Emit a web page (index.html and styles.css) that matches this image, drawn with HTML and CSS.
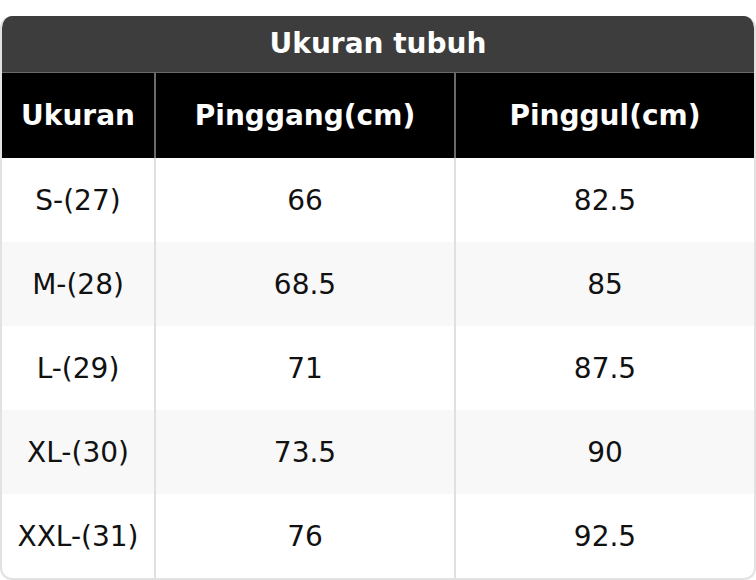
FILE: index.html
```html
<!DOCTYPE html>
<html>
<head>
<meta charset="utf-8">
<link rel="stylesheet" href="styles.css">
</head>
<body>
<div class="card">
  <div class="title">Ukuran tubuh</div>
  <table class="size-table">
    <colgroup>
      <col class="c1"><col class="c2"><col class="c3">
    </colgroup>
    <thead>
      <tr><th>Ukuran</th><th>Pinggang(cm)</th><th>Pinggul(cm)</th></tr>
    </thead>
    <tbody>
      <tr><td>S-(27)</td><td>66</td><td>82.5</td></tr>
      <tr><td>M-(28)</td><td>68.5</td><td>85</td></tr>
      <tr><td>L-(29)</td><td>71</td><td>87.5</td></tr>
      <tr><td>XL-(30)</td><td>73.5</td><td>90</td></tr>
      <tr><td>XXL-(31)</td><td>76</td><td>92.5</td></tr>
    </tbody>
  </table>
</div>
</body>
</html>
```
FILE: styles.css
```css
html, body {
  margin: 0;
  padding: 0;
  background: #ffffff;
}
body {
  padding-top: 16px;
  font-family: "DejaVu Sans", sans-serif;
}
.card {
  width: 756px;
  height: 564px;
  box-sizing: border-box;
  border-radius: 12px;
  overflow: hidden;
  border: 2px solid #e2e2e2;
  border-top: none;
}
.title {
  height: 55px;
  background: #3d3d3d;
  color: #ffffff;
  font-weight: bold;
  font-size: 28px;
  line-height: 1;
  display: flex;
  align-items: center;
  justify-content: center;
  padding-bottom: 1px;
  border-bottom: 1px solid #6a6a6a;
  margin: 0 -2px;
}
.size-table {
  width: 752px;
  border-collapse: collapse;
  table-layout: fixed;
}
.c1 { width: 153px; }
.c2 { width: 300px; }
.c3 { width: 299px; }
.size-table th {
  background: #000000;
  color: #ffffff;
  font-weight: bold;
  font-size: 28px;
  height: 85px;
  padding: 0;
  text-align: center;
  border-right: 2px solid #6a6a6a;
}
.size-table th:last-child { border-right: none; }
.size-table td {
  height: 84px;
  padding: 0;
  text-align: center;
  font-size: 28px;
  color: #111111;
  border-right: 2px solid #e0e0e0;
}
.size-table td:last-child { border-right: none; }
.size-table tbody tr:nth-child(even) td { background: #f8f8f8; }
```
